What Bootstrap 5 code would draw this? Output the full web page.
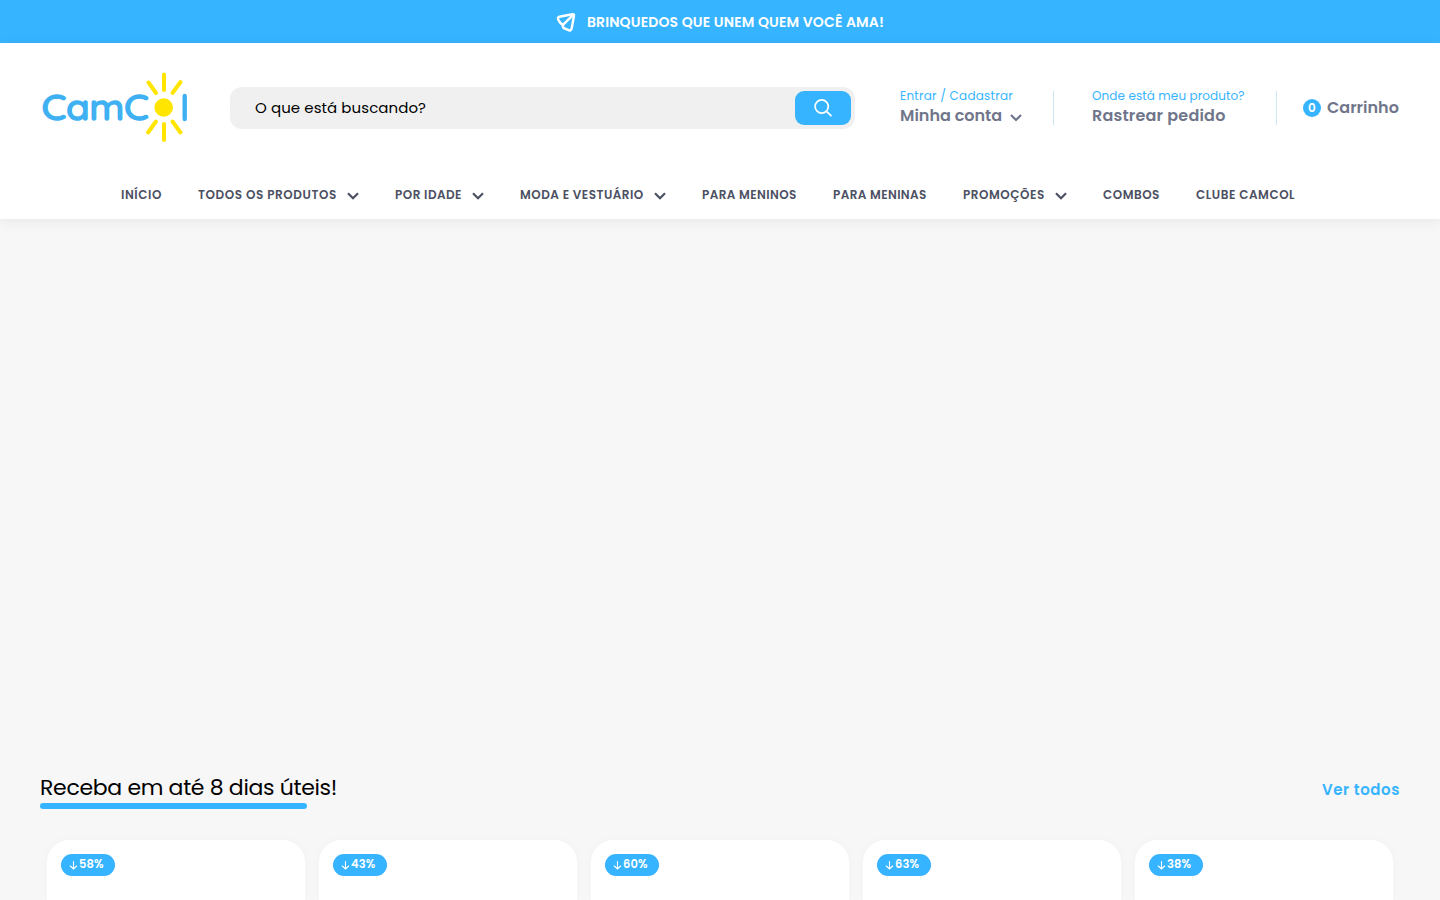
<!DOCTYPE html>
<html lang="pt-BR">
<head>
<meta charset="utf-8">
<meta name="viewport" content="width=device-width, initial-scale=1">
<title>CamCol</title>
<link href="https://cdn.jsdelivr.net/npm/bootstrap@5.3.0/dist/css/bootstrap.min.css" rel="stylesheet">
<style>
:root{--brand:#37b4ff;--ink:#70758b;--nav-ink:#4c5063}
body{font-family:Poppins,Inter,sans-serif;background:#f7f7f7;color:#000}
a{color:inherit;text-decoration:none}
svg{display:block;flex:none}
.announce{height:43px;background:var(--brand);font-size:14px;font-weight:600;letter-spacing:.14px;gap:11px}
.announce span{padding-top:2px}
.site-header{height:176px;box-shadow:0 2px 12px rgba(0,0,0,.07)}
.top-row{height:130px;padding:0 40px}
.top-row>*{flex:none}
.search-box{width:625px;height:42px;margin-left:40px;padding:4px;background:#f0f0f0;border-radius:12px}
.search-box .form-control{font-size:15px;letter-spacing:.07px;padding:0 21px;color:#000;line-height:34px}
.search-box .form-control::placeholder{color:#000;opacity:1}
.search-box .btn{width:56px;height:34px;flex:none;background:var(--brand);border-radius:9px}
.search-box .btn svg{margin-right:1px}
.util-item{line-height:20px}
.util-item small{display:block;font-size:12px;color:var(--brand);letter-spacing:.24px;line-height:17px;padding-bottom:2px}
.tracking small{letter-spacing:.11px}
.util-item strong{font-size:16px;font-weight:600;color:var(--ink)}
.util-item .track-label{letter-spacing:.2px}
.account{width:153px;margin:-3px 0 0 45px}
.account svg{margin-top:3px}
.tracking{width:184px;margin:-3px 0 0 38px}
.rule{width:1px;height:34px;background:#cfe6f5}
.cart{margin-left:26px;gap:6px}
.count{width:18px;height:18px;background:var(--brand);font-size:12px;font-weight:600}
.main-nav{height:46px;padding-left:121px;gap:36px;font-size:12px;font-weight:600;color:var(--nav-ink)}
.main-nav a{display:flex;gap:10px;align-items:center;height:43px;white-space:nowrap}
.main-nav svg{margin-top:2px}
.w-inicio{width:41px;letter-spacing:.6px}
.w-todos{width:139px;letter-spacing:.57px}
.w-idade{width:67px;letter-spacing:.46px}
.w-moda{width:124px;letter-spacing:.48px}
.w-meninos{width:95px;letter-spacing:.41px}
.w-meninas{width:94px;letter-spacing:.39px}
.w-promo{width:82px;letter-spacing:.53px}
.w-combos{width:57px;letter-spacing:.5px}
.w-clube{letter-spacing:.53px}
.hero{height:553px}
.section-head{height:68px;padding:0 40px}
.section-head h2{font-size:22px;font-weight:400;letter-spacing:-.32px;line-height:32px;margin:0}
.section-head h2::after{content:"";display:block;width:267px;height:6px;border-radius:3px;background:var(--brand);margin-top:-1px}
.section-head a{font-size:15px;font-weight:600;letter-spacing:.57px;color:var(--brand);line-height:36px}
.product-row{padding:0 47px;gap:14px}
.product{height:60px;flex:1;padding:14px;background:#fff;border-radius:22px 22px 0 0;box-shadow:0 0 10px rgba(0,0,0,.025)}
.discount{width:53.5px;height:21.5px;gap:1px;padding-left:8px;background:var(--brand);font-size:11.5px;font-weight:600;letter-spacing:.1px}
</style>
</head>
<body>
<div class="announce d-flex align-items-center justify-content-center text-white">
  <svg width="20" height="20" viewBox="0 0 20 20" fill="none" stroke="#fff" stroke-width="2.5" stroke-linejoin="round" stroke-linecap="round"><path d="M3.300 4.700 16.500 2.200Q18.200 2 18 3.600L15.700 16.200Q15 19 12.700 18.200L8.600 16.500Q6.700 15.600 6.700 12.900Q3.900 11.200 2.300 7.700Q1.400 5.300 3.300 4.700Z"/><path d="M17 3.200 6.900 12.900"/></svg>
  <span>BRINQUEDOS QUE UNEM QUEM VOCÊ AMA!</span>
</div>
<header class="site-header bg-white position-relative">
  <div class="top-row d-flex align-items-center">
    <a href="#" aria-label="CamCol">
      <svg width="150" height="76" viewBox="0 0 150 76">
        <g fill="#3fb1f3" stroke="#3fb1f3" stroke-width="1.600" stroke-linejoin="round" font-family="Quicksand,Lato,sans-serif" font-size="36" font-weight="500">
          <text x="1.800" y="50" textLength="107" lengthAdjust="spacingAndGlyphs">CamC</text>
        </g>
        <path d="M144.700 26V49" stroke="#3fb1f3" stroke-width="4.400" stroke-linecap="round"/>
        <circle cx="123.700" cy="37.500" r="9.300" fill="#ffe500"/>
        <path d="M124 4.500V20M124 54V70M108.500 12.500 116 23M140.500 12 132.500 23M116 51.500 108 62.500M132.500 51.500 140.500 62.500" fill="none" stroke="#ffe500" stroke-width="4" stroke-linecap="round"/>
      </svg>
    </a>
    <form class="search-box d-flex align-items-center">
      <input class="form-control border-0 bg-transparent shadow-none" placeholder="O que está buscando?" aria-label="Buscar">
      <button type="button" class="btn border-0 p-0 d-flex align-items-center justify-content-center" aria-label="Buscar">
        <svg width="18" height="18" viewBox="0 0 18 18" fill="none" stroke="#fff" stroke-width="1.700" stroke-linecap="round"><circle cx="7.700" cy="7.500" r="6.600"/><path d="m12.500 12.300 4.500 4.400"/></svg>
      </button>
    </form>
    <a href="#" class="util-item account"><small>Entrar / Cadastrar</small><span class="d-flex align-items-center gap-2"><strong>Minha conta</strong><svg width="12" height="8" viewBox="0 0 12 8" fill="none" stroke="#70758b" stroke-width="2.200"><path d="m1 1 5 5 5-5"/></svg></span></a>
    <span class="rule"></span>
    <a href="#" class="util-item tracking"><small>Onde está meu produto?</small><strong class="track-label">Rastrear pedido</strong></a>
    <span class="rule"></span>
    <a href="#" class="util-item cart d-flex align-items-center"><span class="count rounded-circle text-white d-flex align-items-center justify-content-center">0</span><strong>Carrinho</strong></a>
  </div>
  <nav class="main-nav d-flex">
    <a href="#" class="w-inicio">INÍCIO</a>
    <a href="#"><span class="w-todos">TODOS OS PRODUTOS</span><svg width="12" height="8" viewBox="0 0 12 8" fill="none" stroke="currentColor" stroke-width="2.200"><path d="m1 1.200 5 5 5-5"/></svg></a>
    <a href="#"><span class="w-idade">POR IDADE</span><svg width="12" height="8" viewBox="0 0 12 8" fill="none" stroke="currentColor" stroke-width="2.200"><path d="m1 1.200 5 5 5-5"/></svg></a>
    <a href="#"><span class="w-moda">MODA E VESTUÁRIO</span><svg width="12" height="8" viewBox="0 0 12 8" fill="none" stroke="currentColor" stroke-width="2.200"><path d="m1 1.200 5 5 5-5"/></svg></a>
    <a href="#" class="w-meninos">PARA MENINOS</a>
    <a href="#" class="w-meninas">PARA MENINAS</a>
    <a href="#"><span class="w-promo">PROMOÇÕES</span><svg width="12" height="8" viewBox="0 0 12 8" fill="none" stroke="currentColor" stroke-width="2.200"><path d="m1 1.200 5 5 5-5"/></svg></a>
    <a href="#" class="w-combos">COMBOS</a>
    <a href="#" class="w-clube">CLUBE CAMCOL</a>
  </nav>
</header>
<main>
  <div class="hero"></div>
  <div class="section-head d-flex justify-content-between align-items-start">
    <h2>Receba em até 8 dias úteis!</h2>
    <a href="#">Ver todos</a>
  </div>
  <div class="product-row d-flex" id="products"></div>
</main>
<script>
document.getElementById('products').innerHTML = [58, 43, 60, 63, 38].map(n => `
  <article class="product"><span class="discount rounded-pill text-white d-flex align-items-center">
    <svg width="9" height="10" viewBox="0 0 9 10" fill="none" stroke="#fff" stroke-width="1.1" stroke-linecap="round" stroke-linejoin="round"><path d="M4.500 1.500V9M1.300 6 4.500 9 7.700 6"/></svg>${n}%</span></article>`).join('');
</script>
<script src="https://cdn.jsdelivr.net/npm/bootstrap@5.3.0/dist/js/bootstrap.bundle.min.js"></script>
</body>
</html>
